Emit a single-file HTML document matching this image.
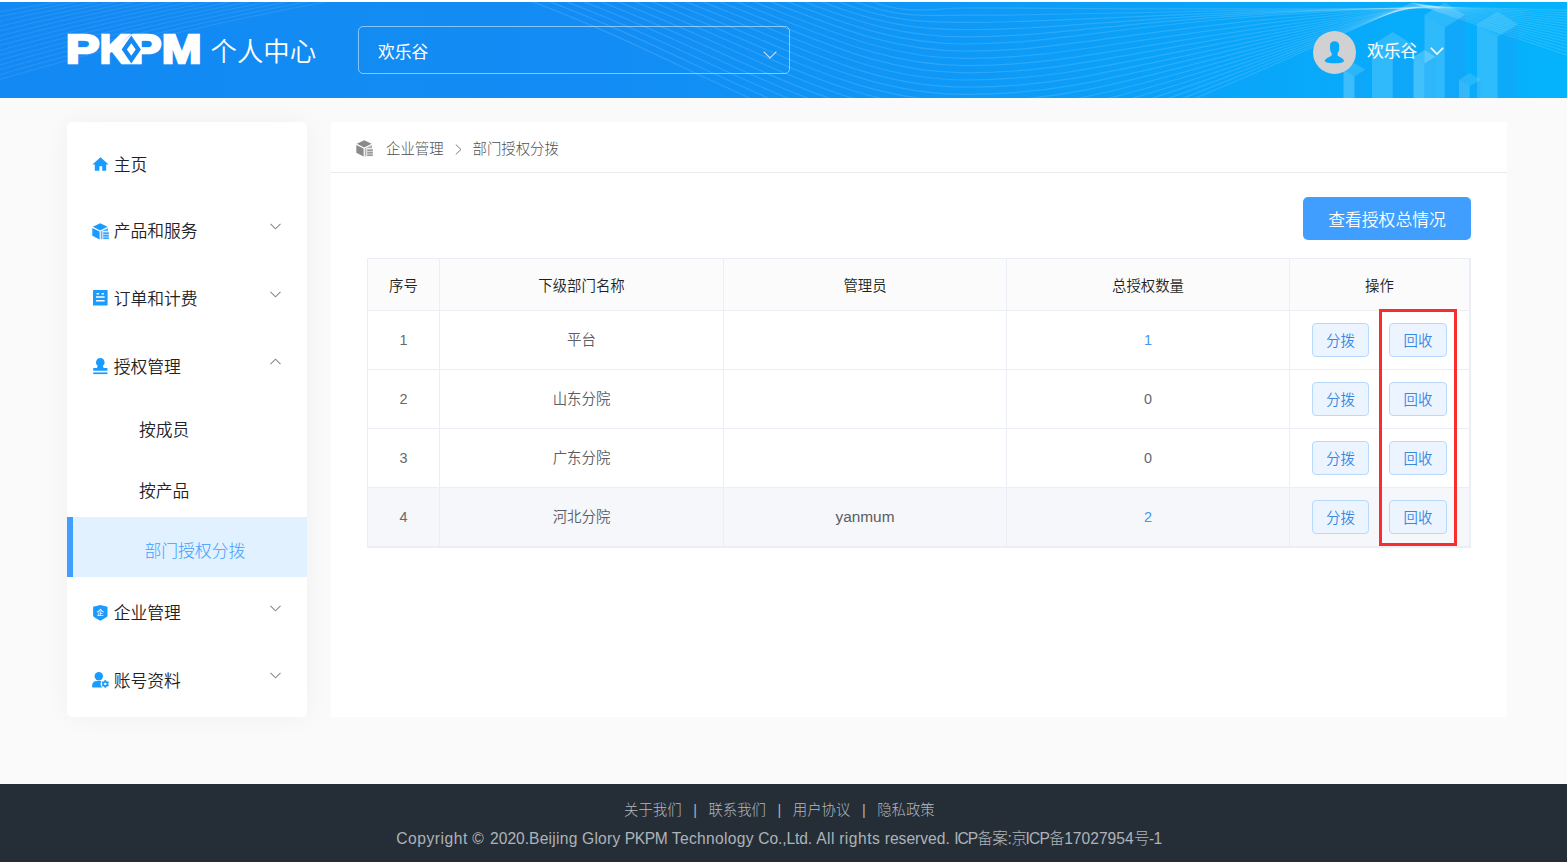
<!DOCTYPE html>
<html lang="zh-CN">
<head>
<meta charset="utf-8">
<title>PKPM 个人中心</title>
<style>
*{box-sizing:border-box;margin:0;padding:0}
html,body{width:1567px;height:862px;overflow:hidden}
body{background:#fafafa;font-family:"Liberation Sans","Noto Sans CJK SC",sans-serif;color:#303133;position:relative;font-weight:300}
svg{display:block;overflow:visible}
/* header */
#top{position:absolute;left:0;top:0;width:1567px;height:2px;background:#fff}
#hdr{position:absolute;left:0;top:2px;width:1567px;height:96px;background:linear-gradient(90deg,#1389f3 0%,#128df4 40%,#0e98f7 60%,#09a6fa 80%,#05b3fc 100%);overflow:hidden}
#hdr svg.deco{position:absolute;left:0;top:0}
#logo{position:absolute;left:67px;top:30px;width:134px;height:34px}
#ttl{position:absolute;left:210.5px;top:32px;font-size:26.4px;font-weight:350;line-height:36px;color:#fff;white-space:nowrap}
#sel{position:absolute;left:358px;top:24px;width:432px;height:48px;border:1px solid rgba(255,255,255,.5);border-radius:5px}
#sel span{position:absolute;left:19px;top:14px;color:#fff;font-weight:400;font-size:16.8px;line-height:24px;white-space:nowrap}
#sel svg{position:absolute;left:404px;top:24px}
#avatar{position:absolute;left:1313px;top:29px}
#uname{position:absolute;left:1367px;top:38px;font-weight:400;font-size:16.8px;line-height:24px;color:#fff;white-space:nowrap}
#uarr{position:absolute;left:1430px;top:45px}
/* sidebar */
#side{position:absolute;left:67px;top:122px;width:240px;height:595px;background:#fff;border-radius:5px;box-shadow:0 0 26px rgba(0,0,0,.045)}
.mi{position:absolute;left:0;width:240px;height:30px;font-weight:350;font-size:16.8px;line-height:30px;color:#1f2226;white-space:nowrap}
.mi svg.ic{position:absolute;left:25px;top:6px}
.mi .tx{position:absolute;left:46.7px;top:0}
.mi svg.ar{position:absolute;left:203px;top:9px}
.sub{position:absolute;left:72px;font-weight:350;font-size:16.8px;line-height:30px;color:#1f2226;white-space:nowrap}
#act{position:absolute;left:0;top:395px;width:240px;height:60px;background:#e1f1ff;border-left:6px solid #409eff}
#act span{position:absolute;left:71.5px;top:20px;font-size:16.8px;line-height:30px;color:#409eff;white-space:nowrap}
/* main */
#main{position:absolute;left:331px;top:122px;width:1176px;height:595px;background:#fff}
#bc{position:absolute;left:0;top:0;width:1176px;height:51px;border-bottom:1px solid #ebebee;font-size:14.4px;color:#4e5054;line-height:20px}
#bc span{position:absolute;top:17px;white-space:nowrap}
#bc svg{position:absolute}
#btn{position:absolute;left:972px;top:75px;width:168px;height:43px;background:#409eff;border-radius:5px;color:#fff;font-weight:350;font-size:16.8px;line-height:43px;padding-top:2px;text-align:center;white-space:nowrap}
table{position:absolute;left:36px;top:136px;width:1104px;border-collapse:separate;border-spacing:0;table-layout:fixed;font-size:14.4px;color:#606266;border:1px solid #ebeef5}
th,td{border-right:1px solid #ebeef5;border-bottom:1px solid #ebeef5;text-align:center;font-weight:300;vertical-align:middle;padding:0}
th{height:52px;background:#fbfbfb;color:#1d1f23;padding-bottom:1px;font-weight:350}
td{height:59px;padding-bottom:3px;font-weight:350;color:#5b5d61}
td.n{font-size:14.4px;padding-bottom:1px;color:#66686c}
tr.hov td{background:#f5f7fa}
td.n.lk{color:#4a94ea}
td.en{font-size:15.4px;letter-spacing:0;padding-bottom:1px}
td.op{padding:0;font-size:0;text-align:left}
.b{display:inline-block;width:57px;height:34px;border:1px solid #b7d9fb;background:#ecf5ff;color:#3688e4;font-weight:350;border-radius:4px;font-size:14.4px;line-height:35px;text-align:center;vertical-align:middle;margin-left:22px}
.b+.b{margin-left:20px;width:58px}
#red{position:absolute;left:1048px;top:187px;width:78px;height:237px;border:3px solid #f82e2e}
/* footer */
#ft{position:absolute;left:0;top:784px;width:1567px;height:78px;background:#252e37;color:#b3b8bd}
#ft .l1{position:absolute;left:623.5px;top:16px;height:20px;line-height:20px;white-space:nowrap;font-size:14.4px}
#ft .l1 span{display:inline-block;text-align:center;vertical-align:top}
#ft .l1 span.t{width:58.7px}
#ft .l1 span.s{width:25.7px;color:#aeb3b8}
#ft .l2{position:absolute;left:396.3px;top:45px;height:20px;line-height:20px;white-space:nowrap;font-size:15.6px;color:#aeb3b8}
#ft .l2 span{display:inline-block;vertical-align:top;text-align:left;white-space:pre}
</style>
</head>
<body>
<div id="top"></div>
<div id="hdr">
<svg class="deco" width="1567" height="96" viewBox="0 0 1567 96">
<g fill="none" stroke="#fff" stroke-opacity=".13" stroke-width="1.2">
<path d="M-2,10.0 Q31.5,4.2 70.0,-2" stroke-opacity=".085"/>
<path d="M-2,14.9 Q40.0,6.2 88.9,-2" stroke-opacity=".085"/>
<path d="M-2,19.7 Q48.5,8.3 107.9,-2" stroke-opacity=".085"/>
<path d="M-2,24.6 Q57.1,10.3 126.8,-2" stroke-opacity=".085"/>
<path d="M-2,29.4 Q65.6,12.4 145.7,-2" stroke-opacity=".085"/>
<path d="M-2,34.3 Q74.1,14.4 164.6,-2" stroke-opacity=".085"/>
<path d="M-2,39.1 Q82.6,16.4 183.6,-2" stroke-opacity=".085"/>
<path d="M-2,44.0 Q91.1,18.5 202.5,-2" stroke-opacity=".085"/>
<path d="M-2,48.9 Q99.6,20.5 221.4,-2" stroke-opacity=".085"/>
<path d="M-2,53.7 Q108.2,22.6 240.4,-2" stroke-opacity=".085"/>
<path d="M-2,58.6 Q116.7,24.6 259.3,-2" stroke-opacity=".085"/>
<path d="M-2,63.4 Q125.2,26.6 278.2,-2" stroke-opacity=".085"/>
<path d="M-2,68.3 Q133.7,28.7 297.1,-2" stroke-opacity=".085"/>
<path d="M-2,73.1 Q142.2,30.7 316.1,-2" stroke-opacity=".085"/>
<path d="M-2,78.0 Q150.8,32.8 335.0,-2" stroke-opacity=".085"/>
<path d="M528.0,-2 C703.2,63.1 812.7,150.0 966,150.0 C1076.0,150.0 1112.0,135.5 1412.0,1.0 L1570,54.1"/>
<path d="M545.0,-2 C713.4,60.6 818.6,142.8 966,142.8 C1076.0,142.8 1113.5,127.5 1413.5,1.2 L1570,50.6"/>
<path d="M562.0,-2 C723.6,58.2 824.6,135.6 966,135.6 C1076.0,135.6 1115.0,119.4 1415.0,1.5 L1570,47.2"/>
<path d="M579.0,-2 C733.8,55.7 830.5,128.4 966,128.4 C1076.0,128.4 1116.5,111.4 1416.5,1.8 L1570,43.8"/>
<path d="M596.0,-2 C744.0,53.3 836.5,121.2 966,121.2 C1076.0,121.2 1118.0,103.4 1418.0,2.0 L1570,40.5"/>
<path d="M613.0,-2 C754.2,50.8 842.5,114.0 966,114.0 C1076.0,114.0 1119.5,95.4 1419.5,2.2 L1570,37.3"/>
<path d="M630.0,-2 C764.4,48.4 848.4,106.8 966,106.8 C1076.0,106.8 1121.0,87.3 1421.0,2.5 L1570,34.1"/>
<path d="M647.0,-2 C774.6,45.9 854.4,99.6 966,99.6 C1076.0,99.6 1122.5,79.3 1422.5,2.8 L1570,31.0"/>
<path d="M664.0,-2 C784.8,43.5 860.3,92.4 966,92.4 C1076.0,92.4 1124.0,71.3 1424.0,3.0 L1570,27.9"/>
<path d="M681.0,-2 C795.0,41.0 866.2,85.2 966,85.2 C1076.0,85.2 1125.5,63.2 1425.5,3.2 L1570,24.9"/>
<path d="M698.0,-2 C805.2,38.6 872.2,78.0 966,78.0 C1076.0,78.0 1127.0,55.2 1427.0,3.5 L1570,22.0"/>
<path d="M715.0,-2 C815.4,36.1 878.1,70.8 966,70.8 C1076.0,70.8 1128.5,47.2 1428.5,3.8 L1570,19.1"/>
<path d="M732.0,-2 C825.6,33.7 884.1,63.6 966,63.6 C1076.0,63.6 1130.0,39.2 1430.0,4.0 L1570,16.3"/>
<path d="M749.0,-2 C835.8,31.2 890.0,56.4 966,56.4 C1076.0,56.4 1131.5,31.1 1431.5,4.2 L1570,13.6"/>
<path d="M766.0,-2 C846.0,28.8 896.0,49.2 966,49.2 C1076.0,49.2 1133.0,23.1 1433.0,4.5 L1570,10.9"/>
<path d="M783.0,-2 C856.2,26.4 902.0,42.0 966,42.0 C1076.0,42.0 1134.5,15.1 1434.5,4.8 L1570,8.3"/>
<path d="M800.0,-2 C866.4,23.9 907.9,34.8 966,34.8 C1076.0,34.8 1136.0,12.5 1436.0,5.0 "/>
<path d="M817.0,-2 C876.6,21.5 913.9,27.6 966,27.6 C1076.0,27.6 1137.5,11.4 1437.5,5.2 "/>
<path d="M834.0,-2 C886.8,19.0 919.8,20.4 966,20.4 C1076.0,20.4 1139.0,10.4 1439.0,5.5 "/>
<path d="M851.0,-2 C897.0,16.6 925.8,13.2 966,13.2 C1076.0,13.2 1140.5,9.3 1440.5,5.8 "/>
<path d="M868.0,-2 C907.2,14.1 931.7,6.0 966,6.0 C1076.0,6.0 1142.0,8.3 1442.0,6.0 "/>
</g>
<polygon points="1372,42.9 1392.75,55.7 1392.75,97 1372,97" fill="#fff" fill-opacity="0.17"/><polygon points="1392.75,55.7 1413.5,42.9 1413.5,97 1392.75,97" fill="#3f8df0" fill-opacity="0.15"/><polygon points="1392.75,30.0 1413.5,42.9 1392.75,55.7 1372,42.9" fill="#fff" fill-opacity="0.16"/>
<polygon points="1424.5,13.1 1444.75,25.6 1444.75,97 1424.5,97" fill="#fff" fill-opacity="0.16"/><polygon points="1444.75,25.6 1465,13.1 1465,97 1444.75,97" fill="#3f8df0" fill-opacity="0.2"/><polygon points="1444.75,0.5 1465,13.1 1444.75,25.6 1424.5,13.1" fill="#fff" fill-opacity="0.14"/>
<polygon points="1477,22.2 1497.5,34.9 1497.5,97 1477,97" fill="#fff" fill-opacity="0.16"/><polygon points="1497.5,34.9 1518,22.2 1518,97 1497.5,97" fill="#3f8df0" fill-opacity="0.15"/><polygon points="1497.5,9.5 1518,22.2 1497.5,34.9 1477,22.2" fill="#fff" fill-opacity="0.12"/>
<polygon points="1343.5,67.8 1354.5,74.6 1354.5,97 1343.5,97" fill="#fff" fill-opacity="0.22"/><polygon points="1354.5,74.6 1365.5,67.8 1365.5,97 1354.5,97" fill="#3f8df0" fill-opacity="0.12"/><polygon points="1354.5,61.0 1365.5,67.8 1354.5,74.6 1343.5,67.8" fill="#fff" fill-opacity="0.14"/>
<polygon points="1413.5,54.8 1424.5,61.6 1424.5,97 1413.5,97" fill="#fff" fill-opacity="0.24"/><polygon points="1424.5,61.6 1435.5,54.8 1435.5,97 1424.5,97" fill="#3f8df0" fill-opacity="0.1"/><polygon points="1424.5,48.0 1435.5,54.8 1424.5,61.6 1413.5,54.8" fill="#fff" fill-opacity="0.22"/>
<polygon points="1459,77.7 1469.75,84.3 1469.75,97 1459,97" fill="#fff" fill-opacity="0.16"/><polygon points="1469.75,84.3 1480.5,77.7 1480.5,97 1469.75,97" fill="#3f8df0" fill-opacity="0.1"/><polygon points="1469.75,71.0 1480.5,77.7 1469.75,84.3 1459,77.7" fill="#fff" fill-opacity="0.12"/>
</svg>
<svg id="logo" width="134" height="34" viewBox="0 0 134 34"><g font-family="Liberation Sans,sans-serif" font-weight="700" font-size="40" fill="#fff" stroke="#fff" stroke-width="2.4"><text transform="translate(-1.27 31) scale(1.269 1)">P</text><text transform="translate(32.78 31) scale(1.023 1)">K</text><text transform="translate(63.33 31) scale(1.173 1)">P</text><text transform="translate(94.8 31) scale(1.194 1)">M</text></g><polygon points="64.3,2 76,17.5 64.3,32.6 47.5,17.5" fill="#fff"/><polygon points="64.3,3.6 73.9,17.5 64.3,31.4 54.7,17.5" fill="#1389f3"/><polygon points="64.3,11.3 68.7,17.5 64.3,23.7 59.9,17.5" fill="#fff"/></svg>
<div id="ttl">个人中心</div>
<div id="sel"><span>欢乐谷</span><svg width="14" height="8" viewBox="0 0 14 8"><path d="M0.6,0.6 L7,7 L13.4,0.6" fill="none" stroke="#d6dbe4" stroke-width="1.1"/></svg></div>
<svg id="avatar" width="43" height="43" viewBox="0 0 43 43"><path fill-rule="evenodd" fill="#d1d1d3" d="M21.5,0 A21.5,21.5 0 1 1 21.5,43 A21.5,21.5 0 1 1 21.5,0 Z M21.5,10.2 C24.5,10.2 26.2,12 26.2,14.5 L26.2,17.5 C26.2,19.5 25.2,21.5 24.5,22.3 L24.5,24.4 C26.5,26 30.6,27 31,30 C31,31.6 26,32.3 21.5,32.3 C17,32.3 12,31.5 11.8,30 C12.2,27 16.5,26 18.7,24.4 L18.7,22.3 C17.9,21.5 17,19.5 17,17.5 L17,14.5 C17,12 18.5,10.2 21.5,10.2 Z"/></svg>
<div id="uname">欢乐谷</div>
<svg id="uarr" width="14" height="8" viewBox="0 0 14 8"><path d="M0.8,0.8 L7,7 L13.2,0.8" fill="none" stroke="#fff" stroke-width="1.6"/></svg>
</div>

<div id="side">
<div class="mi" style="top:29px"><svg class="ic" width="17" height="14" viewBox="0 0 17 14.4" preserveAspectRatio="none" style="left:25px;top:6px"><path d="M8.5,0.2 L16.6,7.6 L14.2,7.6 L14.2,14.2 L10.2,14.2 L10.2,9.6 L7.4,9.6 L7.4,14.2 L2.8,14.2 L2.8,7.6 L0.4,7.6 Z" fill="#1a9bff"/></svg><span class="tx">主页</span></div>
<div class="mi" style="top:95px"><svg class="ic" width="17" height="17" viewBox="0 0 17 17" style="left:25px;top:6px"><polygon points="8.2,0.2 15.6,3.8 8.2,7.4 0.8,3.8" fill="#1a9bff"/><polygon points="0.3,4.9 7.6,8.5 7.6,16.6 0.3,12.8" fill="#1a9bff"/><polygon points="8.8,8.5 16,4.9 16,8 10.2,8 10.2,16 8.8,16.6" fill="#56b3ff"/><rect x="10.6" y="8.6" width="6.2" height="7.6" fill="#3ba6ff" fill-opacity=".45"/><path d="M11.4,9.4 h5.4 v1.5 h-5.4z M11.4,11.9 h5.4 v1.5 h-5.4z M11.4,14.4 h5.4 v1.5 h-5.4z" fill="#3ba6ff"/></svg><span class="tx">产品和服务</span><svg class="ar" style="top:6px" width="11" height="7" viewBox="0 0 11 7"><path d="M0.5,0.8 L5.5,5.8 L10.5,0.8" fill="none" stroke="#858a92" stroke-width="1.1"/></svg></div>
<div class="mi" style="top:163px"><svg class="ic" width="15" height="16" viewBox="0 0 15 16" style="left:26px;top:5px"><rect x="0" y="0" width="14.6" height="15.6" rx="0.6" fill="#1a9bff"/><path d="M3.6,3h2.4v1.4h-2.4z M8.6,3h2.4v1.4h-2.4z M3,6.2h8.6v1.5h-8.6z M3,10h8.6v1.5h-8.6z" fill="#fff"/></svg><span class="tx">订单和计费</span><svg class="ar" style="top:6px" width="11" height="7" viewBox="0 0 11 7"><path d="M0.5,0.8 L5.5,5.8 L10.5,0.8" fill="none" stroke="#858a92" stroke-width="1.1"/></svg></div>
<div class="mi" style="top:231px"><svg class="ic" width="15" height="17" viewBox="0 0 15 17" style="left:26px;top:5px"><path d="M7.3,0 a4.3,4.3 0 0 1 2.6,7.7 L10.6,10 L14.4,10 L14.4,12.8 L0.2,12.8 L0.2,10 L4,10 L4.7,7.7 A4.3,4.3 0 0 1 7.3,0 Z" fill="#1a9bff"/><rect x="0.2" y="14.4" width="14.2" height="1.7" fill="#1a9bff"/></svg><span class="tx">授权管理</span><svg class="ar" style="top:5px" width="11" height="7" viewBox="0 0 11 7"><path d="M0.5,6.2 L5.5,1.2 L10.5,6.2" fill="none" stroke="#858a92" stroke-width="1.1"/></svg></div>
<div class="sub" style="top:294px">按成员</div>
<div class="sub" style="top:355px">按产品</div>
<div id="act"><span>部门授权分拨</span></div>
<div class="mi" style="top:477px"><svg class="ic" width="15" height="16" viewBox="0 0 15 16.6" preserveAspectRatio="none" style="left:26px;top:6px"><path d="M7.3,0 L14.5,1.9 L14.5,10.6 Q14.5,12.2 13,13 L7.3,16.4 L1.6,13 Q0.1,12.2 0.1,10.6 L0.1,1.9 Z" fill="#1a9bff"/><circle cx="7.3" cy="7.8" r="4.6" fill="#2d8cf0" fill-opacity=".55"/><text x="7.3" y="10.4" font-size="7.4" fill="#fff" text-anchor="middle" font-family="Noto Sans CJK SC,sans-serif" font-weight="500">企</text></svg><span class="tx">企业管理</span><svg class="ar" style="top:6px" width="11" height="7" viewBox="0 0 11 7"><path d="M0.5,0.8 L5.5,5.8 L10.5,0.8" fill="none" stroke="#858a92" stroke-width="1.1"/></svg></div>
<div class="mi" style="top:545px"><svg class="ic" width="17" height="16" viewBox="0 0 17 16" style="left:25px;top:5px"><circle cx="6.8" cy="4.2" r="4.2" fill="#1a9bff"/><path d="M0.2,15.4 L0.2,13.2 Q0.2,9.2 5,9 L8.4,9 Q11,9.2 11.6,11 L11.6,15.4 Z" fill="#1a9bff"/><circle cx="13.3" cy="11.9" r="4.7" fill="#fff"/><g fill="#1a9bff"><rect x="12.4" y="8.1" width="1.8" height="2.2" transform="rotate(0 13.3 11.9)"/><rect x="12.4" y="8.1" width="1.8" height="2.2" transform="rotate(60 13.3 11.9)"/><rect x="12.4" y="8.1" width="1.8" height="2.2" transform="rotate(120 13.3 11.9)"/><rect x="12.4" y="8.1" width="1.8" height="2.2" transform="rotate(180 13.3 11.9)"/><rect x="12.4" y="8.1" width="1.8" height="2.2" transform="rotate(240 13.3 11.9)"/><rect x="12.4" y="8.1" width="1.8" height="2.2" transform="rotate(300 13.3 11.9)"/><circle cx="13.3" cy="11.9" r="2.9"/></g><circle cx="13.3" cy="11.9" r="1.2" fill="#fff"/></svg><span class="tx">账号资料</span><svg class="ar" style="top:5px" width="11" height="7" viewBox="0 0 11 7"><path d="M0.5,0.8 L5.5,5.8 L10.5,0.8" fill="none" stroke="#858a92" stroke-width="1.1"/></svg></div>
</div>

<div id="main">
<div id="bc"><svg class="bi" width="17" height="17" viewBox="0 0 17 17" style="left:25px;top:18px"><polygon points="8.2,0.2 15.6,3.8 8.2,7.4 0.8,3.8" fill="#8a8a8a"/><polygon points="0.3,4.9 7.6,8.5 7.6,16.6 0.3,12.8" fill="#8a8a8a"/><polygon points="8.8,8.5 16,4.9 16,8 10.2,8 10.2,16 8.8,16.6" fill="#b0b0b0"/><rect x="10.6" y="8.6" width="6.2" height="7.6" fill="#9c9c9c" fill-opacity=".45"/><path d="M11.4,9.4 h5.4 v1.5 h-5.4z M11.4,11.9 h5.4 v1.5 h-5.4z M11.4,14.4 h5.4 v1.5 h-5.4z" fill="#9c9c9c"/></svg><span style="left:55px">企业管理</span><svg width="7" height="11" viewBox="0 0 7 11" style="left:124px;top:22px"><path d="M0.8,0.6 L6,5.5 L0.8,10.4" fill="none" stroke="#7b7e83" stroke-width="1"/></svg><span style="left:141.5px">部门授权分拨</span></div>
<div id="btn">查看授权总情况</div>
<table>
<colgroup><col style="width:72px"><col style="width:284px"><col style="width:283px"><col style="width:283px"><col style="width:180px"></colgroup>
<tr><th>序号</th><th>下级部门名称</th><th>管理员</th><th>总授权数量</th><th>操作</th></tr>
<tr><td class="n">1</td><td>平台</td><td></td><td class="n lk">1</td><td class="op"><span class="b">分拨</span><span class="b">回收</span></td></tr>
<tr><td class="n">2</td><td>山东分院</td><td></td><td class="n">0</td><td class="op"><span class="b">分拨</span><span class="b">回收</span></td></tr>
<tr><td class="n">3</td><td>广东分院</td><td></td><td class="n">0</td><td class="op"><span class="b">分拨</span><span class="b">回收</span></td></tr>
<tr class="hov"><td class="n">4</td><td>河北分院</td><td class="en">yanmum</td><td class="n lk">2</td><td class="op"><span class="b">分拨</span><span class="b">回收</span></td></tr>
</table>
<div id="red"></div>
</div>

<div id="ft">
<div class="l1"><span class="t">关于我们</span><span class="s">|</span><span class="t">联系我们</span><span class="s">|</span><span class="t">用户协议</span><span class="s">|</span><span class="t">隐私政策</span></div>
<div class="l2"><span style="width:75.9px;letter-spacing:0.53px">Copyright </span><span style="width:17.9px;letter-spacing:1.2px">© </span><span style="width:38.9px">2020.</span><span style="width:53.1px;letter-spacing:0.27px">Beijing </span><span style="width:42.8px;letter-spacing:0.23px">Glory </span><span style="width:46.9px;letter-spacing:-0.43px">PKPM </span><span style="width:86.6px;letter-spacing:0.33px">Technology </span><span style="width:58.0px;letter-spacing:-0.13px">Co.,Ltd. </span><span style="width:22.8px;letter-spacing:0.35px">All </span><span style="width:45.6px;letter-spacing:0.51px">rights </span><span style="width:69.6px">reserved. </span><span style="width:22.8px;letter-spacing:-1.07px">ICP</span><span style="width:34.3px;letter-spacing:-0.41px">备案:</span><span style="width:14.2px;letter-spacing:-1.2px">京</span><span style="width:23.4px;letter-spacing:-0.87px">ICP</span><span style="width:15.2px;letter-spacing:-0.41px">备</span><span style="width:69.7px">17027954</span><span style="width:15.0px;letter-spacing:-0.61px">号</span><span style="width:12.6px;letter-spacing:-0.64px">-1</span></div>
</div>
</body>
</html>
